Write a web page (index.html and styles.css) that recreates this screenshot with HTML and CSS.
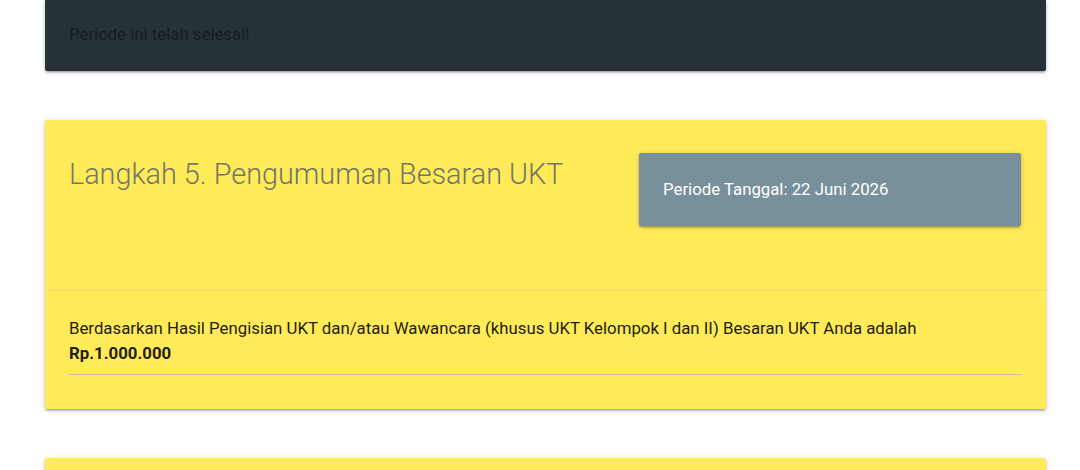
FILE: index.html
```html
<!DOCTYPE html>
<html lang="id">
<head>
<meta charset="utf-8">
<title>Pengumuman UKT</title>
<link rel="stylesheet" href="styles.css">
</head>
<body>
<main class="container">
  <section class="card card-dark">
    <p class="card-text">Periode ini telah selesai!</p>
  </section>

  <section class="card card-yellow">
    <div class="card-header">
      <h2 class="card-title">Langkah 5. Pengumuman Besaran UKT</h2>
      <div class="period-box">Periode Tanggal: 22 Juni 2026</div>
    </div>
    <div class="card-body">
      <p class="result">Berdasarkan Hasil Pengisian UKT dan/atau Wawancara (khusus UKT Kelompok I dan II) Besaran UKT Anda adalah<br><strong>Rp.1.000.000</strong></p>
      <hr class="rule">
    </div>
  </section>

  <section class="card card-yellow card-next"></section>
</main>
</body>
</html>
```

FILE: styles.css
```css
html, body {
  margin: 0;
  padding: 0;
  background: #ffffff;
  font-family: Roboto, "Noto Sans", sans-serif;
  overflow: hidden;
}

.container {
  width: 1001px;
  margin-left: 45px;
  display: flex;
  flex-direction: column;
  gap: 49px;
}

.card {
  border-radius: 2px;
  box-shadow: 0 2px 2px 0 rgba(0,0,0,0.14), 0 3px 1px -2px rgba(0,0,0,0.12), 0 1px 5px 0 rgba(0,0,0,0.2);
}

.card-dark {
  background: #263238;
  padding: 23px 24px 26px;
  border-radius: 0 0 2px 2px;
}

.card-text {
  margin: 0;
  font-size: 16.8px;
  line-height: 22px;
  color: #151c20;
}

.card-yellow {
  background: #ffeb58;
}

.card-header {
  display: flex;
  justify-content: space-between;
  align-items: flex-start;
  padding: 33px 25px 64px 24px;
  border-bottom: 1px solid rgba(160,160,160,0.2);
}

.card-title {
  margin: 0;
  padding-top: 1px;
  font-size: 28.8px;
  font-weight: 300;
  line-height: 40px;
  color: #737668;
}

.period-box {
  width: 382px;
  box-sizing: border-box;
  background: #78909c;
  color: #ffffff;
  font-size: 16.8px;
  line-height: 22px;
  padding: 25px 24px 26px;
  border-radius: 2px;
  box-shadow: 0 2px 2px 0 rgba(0,0,0,0.14), 0 3px 1px -2px rgba(0,0,0,0.12), 0 1px 5px 0 rgba(0,0,0,0.2);
}

.card-body {
  padding: 25px 24px 34px;
}

.result {
  margin: 0;
  font-size: 16.8px;
  line-height: 25px;
  color: #1f1d10;
}

.result strong {
  font-weight: 700;
}

.rule {
  margin: 8px 0 0;
  border: 0;
  border-top: 1px solid #c9c0a0;
  height: 0;
}

.card-next {
  height: 40px;
}
```
